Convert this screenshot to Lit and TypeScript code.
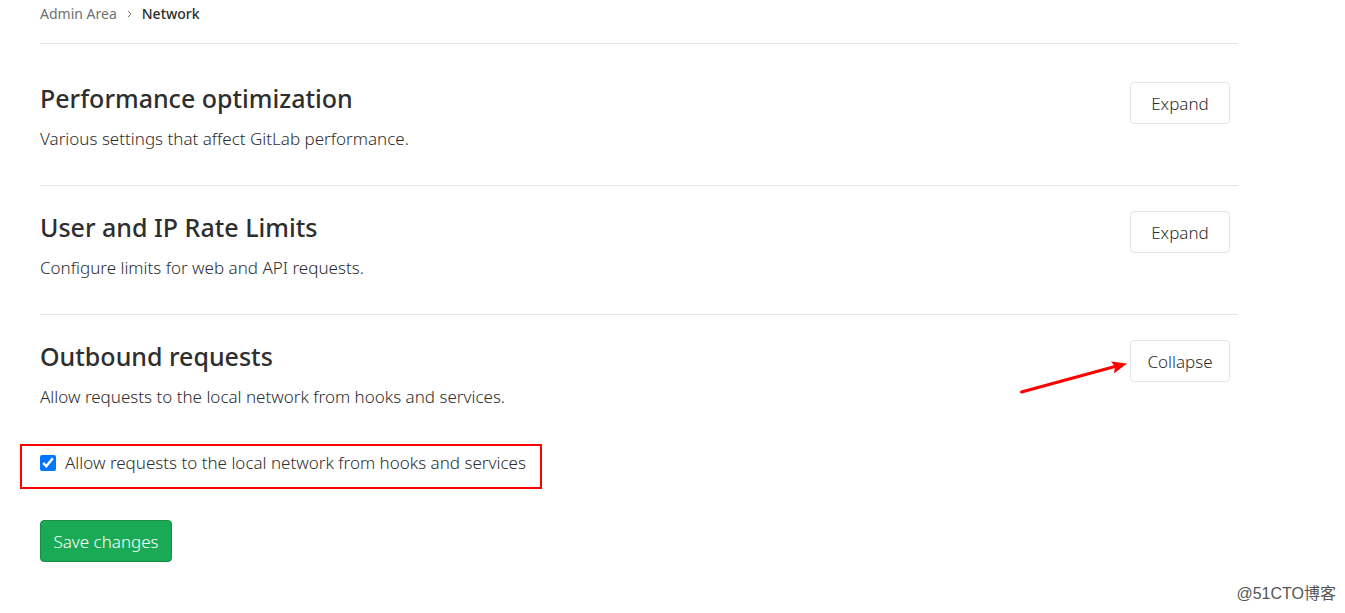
import { LitElement, html, css, svg } from "lit";
import { customElement, property, state } from "lit/decorators.js";

@customElement("settings-section")
class SettingsSection extends LitElement {
  @property() heading = "";
  @property() description = "";
  @property({ type: Boolean }) expanded = false;
  @property({ type: Boolean }) highlighted = false;

  static styles = css`
    :host {
      display: block;
      padding: 25px 8px 34px 0;
      border-bottom: 1px solid #e5e5e5;
    }
    :host(:last-of-type) {
      border-bottom: none;
    }
    .head {
      display: flex;
      align-items: flex-start;
      justify-content: space-between;
      gap: 16px;
    }
    h4 {
      margin: 0 0 12px;
      font-size: 25px;
      line-height: 33px;
      font-weight: 500;
      color: #2e2e2e;
    }
    p {
      margin: 0;
      font-size: 17px;
      line-height: 24px;
    }
    .action {
      position: relative;
      flex: none;
    }
    button {
      display: block;
      min-width: 100px;
      height: 42px;
      padding: 0 12px;
      border: 1px solid #e5e5e5;
      border-radius: 4px;
      background: #fff;
      color: #2e2e2e;
      font: inherit;
      font-size: 17px;
      cursor: pointer;
    }
    .arrow {
      position: absolute;
      right: 99px;
      top: 12px;
      width: 114px;
      height: 44px;
      pointer-events: none;
    }
  `;

  private toggle() {
    this.expanded = !this.expanded;
  }

  render() {
    return html`
      <div class="head">
        <div>
          <h4>${this.heading}</h4>
          <p>${this.description}</p>
        </div>
        <div class="action">
          <button type="button" aria-expanded=${this.expanded} @click=${this.toggle}>
            ${this.expanded ? "Collapse" : "Expand"}
          </button>
          ${this.highlighted
            ? html`<svg class="arrow" viewBox="0 0 114 44" aria-hidden="true">
                ${svg`<path d="M4.500 40 98 14.500" stroke="#f00" stroke-width="3" stroke-linecap="round" />
                <path d="M110 11.500 94 9.500 98 14.500 97 21.500Z" fill="#f00" />`}
              </svg>`
            : null}
        </div>
      </div>
      ${this.expanded ? html`<slot></slot>` : null}
    `;
  }
}

@customElement("app-root")
class AppRoot extends LitElement {
  @state() private allowLocal = true;

  static styles = css`
    :host {
      display: block;
      position: relative;
      box-sizing: border-box;
      min-height: 100vh;
      overflow: hidden;
      background: #fff;
      color: #2e2e2e;
      font-family: "Noto Sans", "Open Sans", sans-serif;
      font-weight: 320;
    }
    main {
      padding: 0 107px 0 40px;
    }
    nav {
      display: flex;
      align-items: center;
      gap: 10px;
      padding: 4px 0 19px;
      margin-bottom: 13px;
      border-bottom: 1px solid #e5e5e5;
      font-size: 14px;
      line-height: 20px;
    }
    nav a {
      color: #707070;
      text-decoration: none;
      font-weight: 400;
    }
    nav .current {
      color: #2e2e2e;
      font-weight: 500;
    }
    .chevron {
      width: 5px;
      height: 8px;
    }
    .option {
      display: flex;
      width: fit-content;
      align-items: center;
      gap: 9px;
      margin: 35px 0 31px -20px;
      padding: 5px 14px 12px 18px;
      border: 2px solid #f00;
      font-size: 17px;
      line-height: 24px;
    }
    .option input {
      width: 16px;
      height: 16px;
      margin: 0;
      accent-color: #0075ff;
    }
    .save {
      display: block;
      height: 42px;
      min-width: 132px;
      padding: 0 12px;
      border: 1px solid #168f48;
      border-radius: 4px;
      background: #1aaa55;
      color: #fff;
      font: inherit;
      font-size: 17px;
      cursor: pointer;
    }
    .watermark {
      position: absolute;
      right: 9px;
      bottom: 8px;
      font: 400 16px/22px "Liberation Sans", "Noto Sans CJK SC", sans-serif;
      color: #555;
    }
  `;

  private onToggle(e: Event) {
    this.allowLocal = (e.target as HTMLInputElement).checked;
  }

  render() {
    return html`
      <main>
        <nav aria-label="Breadcrumb">
          <a href="#admin">Admin Area</a>
          <svg class="chevron" viewBox="0 0 5 8" aria-hidden="true">
            <path d="M1 1l3 3-3 3" fill="none" stroke="#707070" stroke-width="1" />
          </svg>
          <a class="current" href="#network" aria-current="page">Network</a>
        </nav>
        <settings-section
          heading="Performance optimization"
          description="Various settings that affect GitLab performance."
        ></settings-section>
        <settings-section
          heading="User and IP Rate Limits"
          description="Configure limits for web and API requests."
        ></settings-section>
        <settings-section
          heading="Outbound requests"
          description="Allow requests to the local network from hooks and services."
          expanded
          highlighted
        >
          <form @submit=${(e: Event) => e.preventDefault()}>
            <label class="option">
              <input type="checkbox" .checked=${this.allowLocal} @change=${this.onToggle} />
              <span>Allow requests to the local network from hooks and services</span>
            </label>
            <button class="save" type="submit">Save changes</button>
          </form>
        </settings-section>
      </main>
      <div class="watermark">@51CTO博客</div>
    `;
  }
}
